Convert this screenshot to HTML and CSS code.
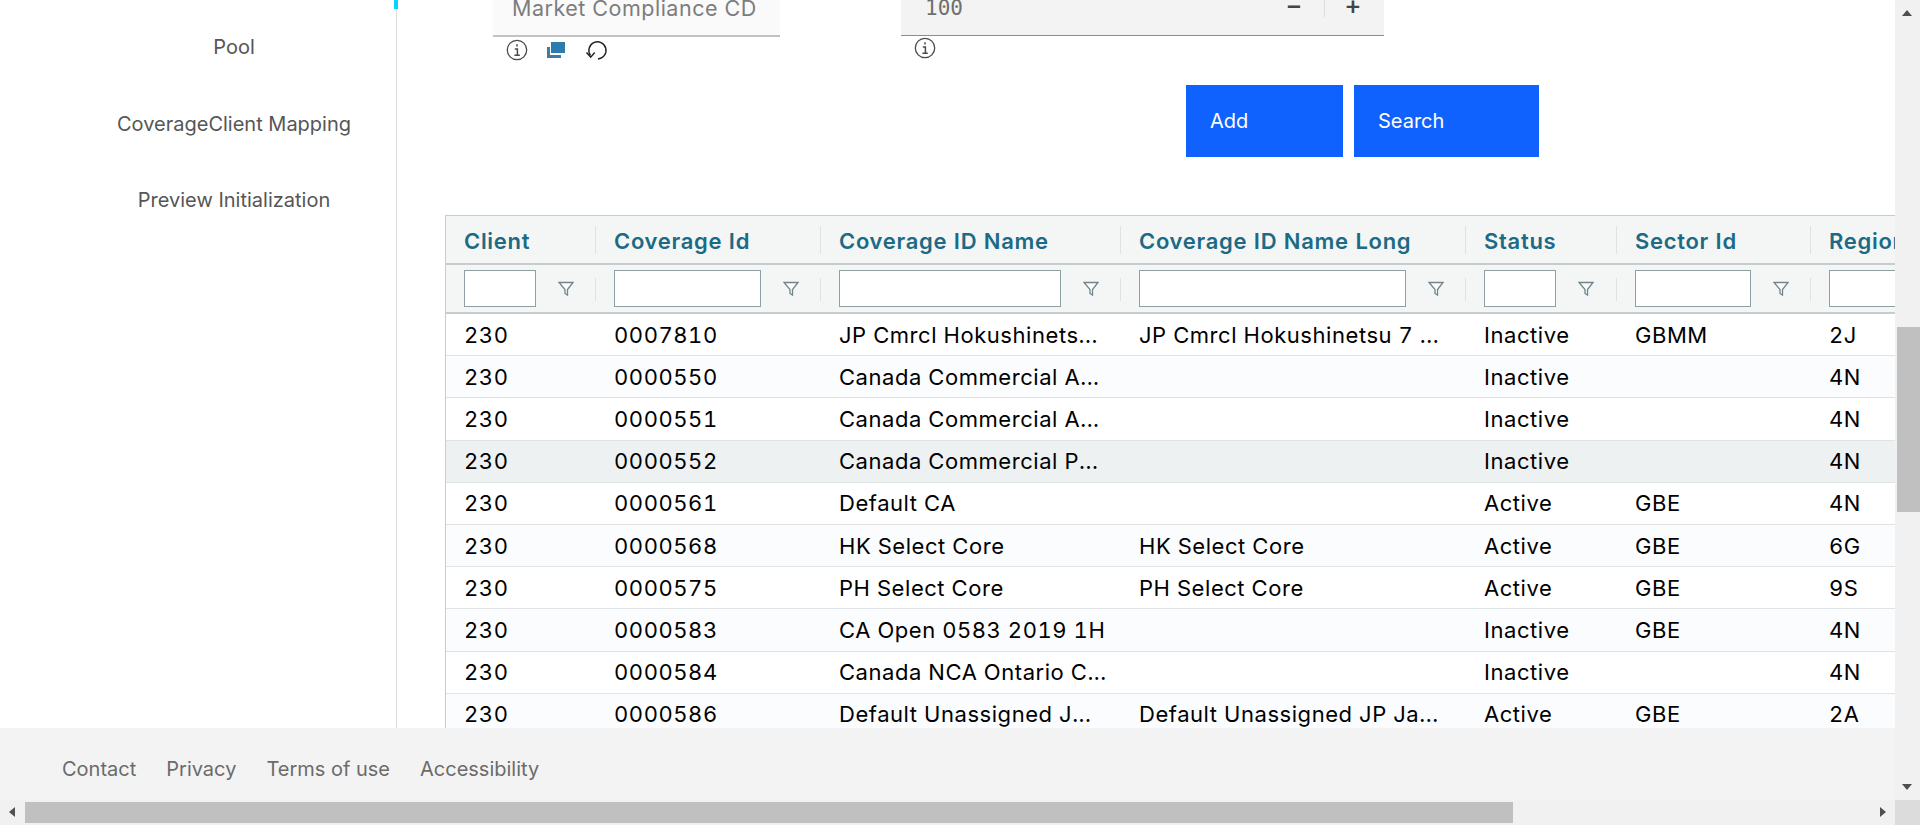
FILE: index.html
```html
<!DOCTYPE html>
<html lang="en">
<head>
<meta charset="utf-8">
<title>Coverage</title>
<link rel="stylesheet" href="styles.css">
</head>
<body>
<div class="window">
  <div class="viewport">
    <div class="content">
      <nav class="sidebar">
        <span class="active-mark"></span>
        <a class="nav-item">Pool</a>
        <a class="nav-item">CoverageClient Mapping</a>
        <a class="nav-item">Preview Initialization</a>
      </nav>
      <main class="main">
        <div class="fields">
          <div class="field-col field-col-a">
            <div class="field field-select"><span class="field-text">Market Compliance CD</span></div>
            <div class="hints hints-a">
              <svg class="icon" width="22" height="22" viewBox="0 0 22 22"><circle cx="11" cy="11" r="9.7" fill="none" stroke="#4a4a4a" stroke-width="1.3"/><path d="M11 5.2v2.2M8.8 10h2.6v6M8.4 16.2h5.4" fill="none" stroke="#4a4a4a" stroke-width="1.5"/></svg>
              <svg class="icon" width="20" height="18" viewBox="0 0 20 18"><rect x="5" y="1" width="14" height="11" fill="#2d7cb0"/><path d="M1 6h3v8h11v3H1z" fill="#3f7ba6"/></svg>
              <svg class="icon" width="24" height="22" viewBox="0 0 24 22"><path d="M6.5 16.5A8.6 8.6 0 1 1 14 20" fill="none" stroke="#222" stroke-width="1.4"/><path d="M2.5 13.5l4.2 4.6 4-4.6" fill="none" stroke="#222" stroke-width="1.4"/></svg>
            </div>
          </div>
          <div class="field-col field-col-b">
            <div class="field field-number">
              <span class="field-mono">100</span>
              <span class="stepper">
                <span class="step step-minus">−</span>
                <span class="step-sep"></span>
                <span class="step step-plus">+</span>
              </span>
            </div>
            <div class="hints hints-b">
              <svg class="icon" width="22" height="22" viewBox="0 0 22 22"><circle cx="11" cy="11" r="9.7" fill="none" stroke="#4a4a4a" stroke-width="1.3"/><path d="M11 5.2v2.2M8.8 10h2.6v6M8.4 16.2h5.4" fill="none" stroke="#4a4a4a" stroke-width="1.5"/></svg>
            </div>
          </div>
        </div>
        <div class="actions">
          <button class="btn btn-add">Add</button>
          <button class="btn btn-search">Search</button>
        </div>
        <div class="table">
          <div class="row head">
            <div class="cell">Client</div>
            <div class="cell">Coverage Id</div>
            <div class="cell">Coverage ID Name</div>
            <div class="cell">Coverage ID Name Long</div>
            <div class="cell">Status</div>
            <div class="cell">Sector Id</div>
            <div class="cell">Region</div>
          </div>
          <div class="row filters">
            <div class="cell"><input class="filter-input f1" aria-label="Client"><svg class="funnel" width="16" height="16" viewBox="0 0 16 16"><path d="M1 1.5h14L9.5 8.5V14L7 12.5V8.5z" fill="#fbfcfc" stroke="#74848a" stroke-width="1.3"/></svg></div>
            <div class="cell"><input class="filter-input f2" aria-label="Coverage Id"><svg class="funnel" width="16" height="16" viewBox="0 0 16 16"><path d="M1 1.5h14L9.5 8.5V14L7 12.5V8.5z" fill="#fbfcfc" stroke="#74848a" stroke-width="1.3"/></svg></div>
            <div class="cell"><input class="filter-input f3" aria-label="Coverage ID Name"><svg class="funnel" width="16" height="16" viewBox="0 0 16 16"><path d="M1 1.5h14L9.5 8.5V14L7 12.5V8.5z" fill="#fbfcfc" stroke="#74848a" stroke-width="1.3"/></svg></div>
            <div class="cell"><input class="filter-input f4" aria-label="Coverage ID Name Long"><svg class="funnel" width="16" height="16" viewBox="0 0 16 16"><path d="M1 1.5h14L9.5 8.5V14L7 12.5V8.5z" fill="#fbfcfc" stroke="#74848a" stroke-width="1.3"/></svg></div>
            <div class="cell"><input class="filter-input f1" aria-label="Status"><svg class="funnel" width="16" height="16" viewBox="0 0 16 16"><path d="M1 1.5h14L9.5 8.5V14L7 12.5V8.5z" fill="#fbfcfc" stroke="#74848a" stroke-width="1.3"/></svg></div>
            <div class="cell"><input class="filter-input f6" aria-label="Sector Id"><svg class="funnel" width="16" height="16" viewBox="0 0 16 16"><path d="M1 1.5h14L9.5 8.5V14L7 12.5V8.5z" fill="#fbfcfc" stroke="#74848a" stroke-width="1.3"/></svg></div>
            <div class="cell"><input class="filter-input f6" aria-label="Region"></div>
          </div>
          <div class="row body"><div class="cell">230</div><div class="cell">0007810</div><div class="cell">JP Cmrcl Hokushinets...</div><div class="cell">JP Cmrcl Hokushinetsu 7 ...</div><div class="cell">Inactive</div><div class="cell">GBMM</div><div class="cell">2J</div></div>
          <div class="row body alt"><div class="cell">230</div><div class="cell">0000550</div><div class="cell">Canada Commercial A...</div><div class="cell"></div><div class="cell">Inactive</div><div class="cell"></div><div class="cell">4N</div></div>
          <div class="row body"><div class="cell">230</div><div class="cell">0000551</div><div class="cell">Canada Commercial A...</div><div class="cell"></div><div class="cell">Inactive</div><div class="cell"></div><div class="cell">4N</div></div>
          <div class="row body hover"><div class="cell">230</div><div class="cell">0000552</div><div class="cell">Canada Commercial P...</div><div class="cell"></div><div class="cell">Inactive</div><div class="cell"></div><div class="cell">4N</div></div>
          <div class="row body"><div class="cell">230</div><div class="cell">0000561</div><div class="cell">Default CA</div><div class="cell"></div><div class="cell">Active</div><div class="cell">GBE</div><div class="cell">4N</div></div>
          <div class="row body alt"><div class="cell">230</div><div class="cell">0000568</div><div class="cell">HK Select Core</div><div class="cell">HK Select Core</div><div class="cell">Active</div><div class="cell">GBE</div><div class="cell">6G</div></div>
          <div class="row body"><div class="cell">230</div><div class="cell">0000575</div><div class="cell">PH Select Core</div><div class="cell">PH Select Core</div><div class="cell">Active</div><div class="cell">GBE</div><div class="cell">9S</div></div>
          <div class="row body alt"><div class="cell">230</div><div class="cell">0000583</div><div class="cell">CA Open 0583 2019 1H</div><div class="cell"></div><div class="cell">Inactive</div><div class="cell">GBE</div><div class="cell">4N</div></div>
          <div class="row body"><div class="cell">230</div><div class="cell">0000584</div><div class="cell">Canada NCA Ontario C...</div><div class="cell"></div><div class="cell">Inactive</div><div class="cell"></div><div class="cell">4N</div></div>
          <div class="row body alt"><div class="cell">230</div><div class="cell">0000586</div><div class="cell">Default Unassigned J...</div><div class="cell">Default Unassigned JP Ja...</div><div class="cell">Active</div><div class="cell">GBE</div><div class="cell">2A</div></div>
        </div>
      </main>
    </div>
    <footer class="footer">
      <a class="foot-link">Contact</a>
      <a class="foot-link">Privacy</a>
      <a class="foot-link">Terms of use</a>
      <a class="foot-link">Accessibility</a>
    </footer>
  </div>
  <div class="vbar">
    <span class="arrow arrow-up"></span>
    <span class="vthumb"></span>
    <span class="arrow arrow-down"></span>
  </div>
  <div class="hbar">
    <span class="arrow arrow-left"></span>
    <span class="hthumb"></span>
    <span class="arrow arrow-right"></span>
  </div>
  <div class="corner"></div>
</div>
</body>
</html>
```
FILE: styles.css
```css
* { box-sizing: border-box; }
html, body { margin: 0; height: 100%; overflow: hidden; }
body {
  background: #fff;
  font-family: Inter, "Noto Sans", sans-serif;
  font-size: 20px;
  color: #000;
}
.window {
  display: grid;
  grid-template-columns: 1895px 25px;
  grid-template-rows: 800px 25px;
  width: 1920px;
  height: 825px;
}
.viewport { display: flex; flex-direction: column; overflow: hidden; }
.content { display: flex; height: 728px; overflow: hidden; flex: none; }

.sidebar {
  position: relative;
  flex: none;
  width: 397px;
  border-right: 1px solid #dcdcdc;
  display: flex;
  flex-direction: column;
  align-items: center;
  padding: 9px 0 0 72px;
}
.active-mark {
  position: absolute;
  left: 394px;
  top: 0;
  width: 4px;
  height: 9px;
  background: #00d4ff;
}
.nav-item {
  height: 76.5px;
  line-height: 76.5px;
  color: #565656;
  white-space: nowrap;
}

.main { flex: 1; min-width: 0; overflow: hidden; }
.fields { display: flex; height: 85px; padding-left: 96px; gap: 121px; }
.field-col-a { width: 287px; }
.field-col-b { width: 483px; }
.field { display: flex; align-items: center; }
.field-select { height: 37px; background: #fafafa; border-bottom: 2px solid #c2c2c2; padding: 0 0 20px 19px; }
.field-number { height: 36px; background: #f3f3f3; border-bottom: 1px solid #8d8d8d; padding: 0 0 20px 24px; justify-content: space-between; }
.field-text { color: #7d7d7d; font-size: 21.5px; letter-spacing: 0.5px; line-height: 20px; white-space: nowrap; }
.field-mono { font-family: "DejaVu Sans Mono", "Liberation Mono", monospace; font-size: 21px; color: #6f6f6f; line-height: 18px; }
.stepper { display: flex; align-items: center; height: 18px; }
.step { width: 30px; margin-bottom: 5px; text-align: center; color: #444; font-size: 26px; line-height: 18px; font-weight: 500; }
.step-minus { margin-right: 15px; }
.step-plus { margin-left: 13px; margin-right: 16px; }
.step-sep { width: 1px; height: 18px; background: #dcdcdc; }
.hints { display: flex; align-items: center; }
.hints-a { height: 26px; padding-left: 13px; gap: 18px; }
.hints-b { height: 24px; padding-left: 13px; }
.icon { flex: none; display: block; }

.actions { display: flex; gap: 11px; height: 72px; padding-left: 789px; }
.btn {
  border: 0;
  padding: 0 0 1px 24px;
  background: #0f62fe;
  color: #fff;
  font: inherit;
  text-align: left;
}
.btn-add { width: 157px; }
.btn-search { width: 185px; }

.table {
  margin: 58px 0 0 48px;
  width: 1700px;
  border-top: 1px solid #c6cdcd;
  border-left: 1px solid #c6cdcd;
  font-size: 22px;
  letter-spacing: 0.55px;
  font-feature-settings: "tnum";
}
.row { display: grid; grid-template-columns: 150px 225px 300px 345px 151px 194px 1fr; align-items: center; }
.cell { padding-left: 18px; white-space: nowrap; overflow: hidden; min-width: 0; }
.head {
  height: 49px;
  background: #f4f6f6;
  border-bottom: 2px solid #c6cdcd;
  color: #1c6a85;
  font-weight: 600;
  letter-spacing: 0.7px;
}
.head .cell { line-height: 26px; padding-top: 2px; }
.head .cell:not(:last-child) { border-right: 1px solid #dde2e2; }
.filters { height: 49px; background: #f4f6f6; border-bottom: 2px solid #c6cdcd; }
.filters .cell { display: flex; align-items: center; height: 37px; position: relative; }
.filters .cell:not(:last-child)::after {
  content: "";
  position: absolute;
  right: 0;
  top: 8px;
  width: 1px;
  height: 23px;
  background: #dde2e2;
}
.filter-input { height: 37px; padding: 0; border: 1px solid #8ea0a3; background: #fff; flex: none; }
.f1 { width: 72px; }
.f2 { width: 147px; }
.f3 { width: 222px; }
.f4 { width: 267px; }
.f6 { width: 116px; }
.funnel { flex: none; margin-left: 22px; }
.body { height: 42.2px; background: #fff; border-bottom: 1px solid #dfe3e6; }
.alt { background: #fbfcfe; }
.hover { background: #eef1f2; }

.footer {
  flex: 1;
  display: flex;
  align-items: center;
  gap: 30px;
  padding: 10px 0 0 62px;
  background: #f3f3f3;
  color: #6b6b6b;
}

.vbar { position: relative; background: #f1f1f1; }
.vthumb { position: absolute; left: 2px; right: 0; top: 327px; height: 185px; background: #c0c0c0; }
.hbar { position: relative; background: #f1f1f1; }
.hthumb { position: absolute; left: 25px; top: 2px; width: 1488px; height: 21px; background: #c0c0c0; }
.corner { background: #dcdcdc; }
.arrow { position: absolute; width: 0; height: 0; border-style: solid; border-color: transparent; }
.arrow-up { top: 10px; left: 7px; border-width: 0 5.5px 6px; border-bottom-color: #505050; }
.arrow-down { top: 784px; left: 7px; border-width: 6px 5.5px 0; border-top-color: #505050; }
.arrow-left { left: 9px; top: 7px; border-width: 5.5px 6px 5.5px 0; border-right-color: #505050; }
.arrow-right { left: 1880px; top: 7px; border-width: 5.5px 0 5.5px 6px; border-left-color: #505050; }
```
